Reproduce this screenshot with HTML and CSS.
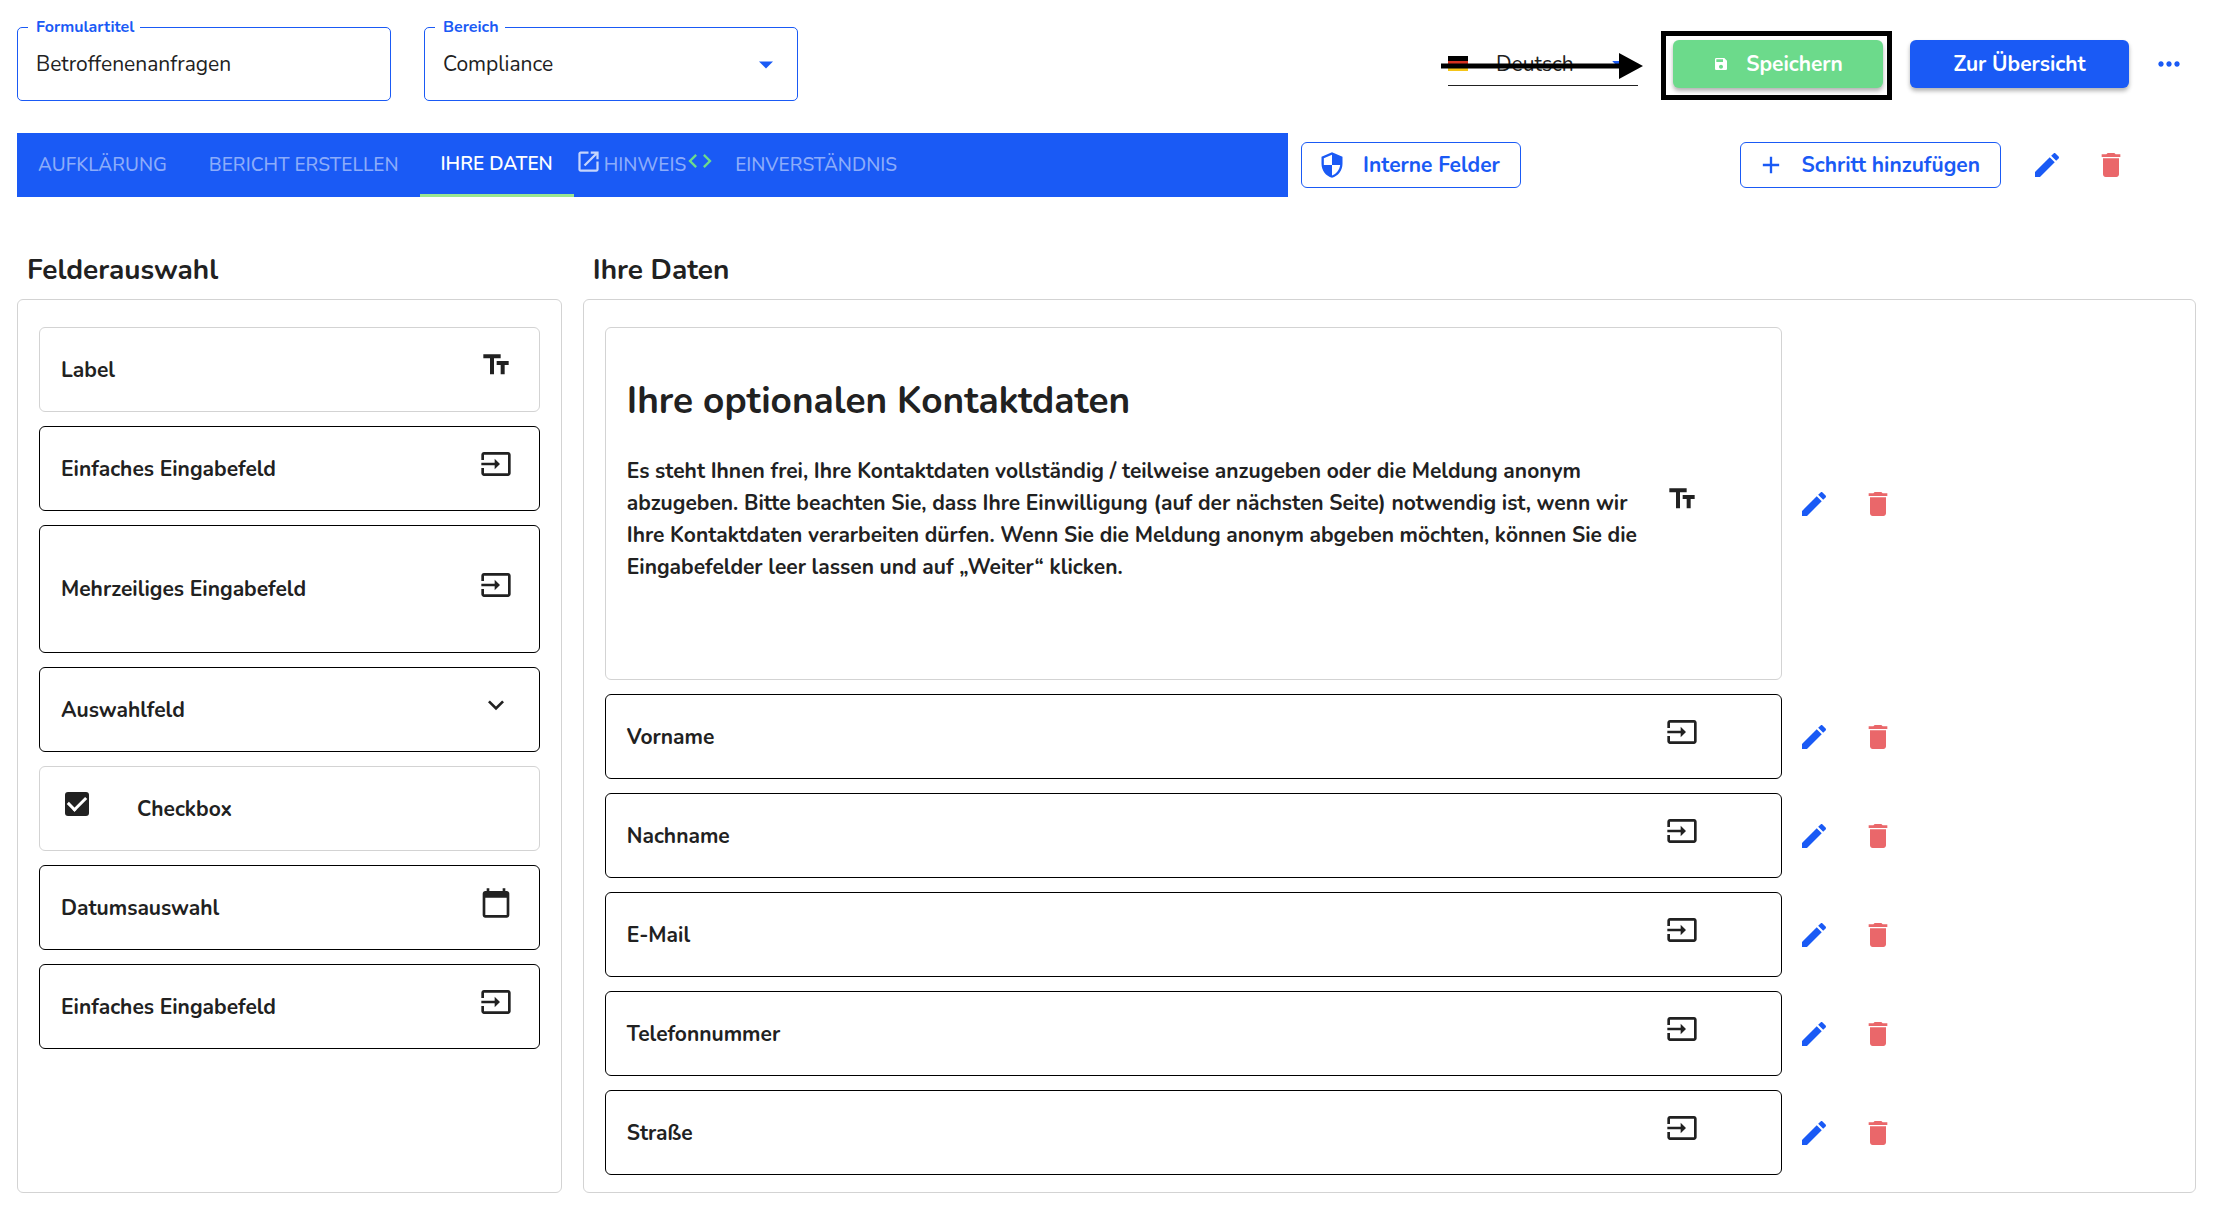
FILE: index.html
```html
<!DOCTYPE html>
<html lang="de">
<head>
<meta charset="utf-8">
<title>Formular bearbeiten</title>
<link rel="stylesheet" href="styles.css">
</head>
<body>
<svg class="sprite" aria-hidden="true">
  <symbol id="i-input" viewBox="0 0 24 24"><path d="M21 3.01H3c-1.1 0-2 .9-2 2V9h2V4.99h18v14.03H3V15H1v4.01c0 1.1.9 1.98 2 1.98h18c1.1 0 2-.88 2-1.98v-14c0-1.11-.9-2-2-2zM11 16l4-4-4-4v3H1v2h10v3z"/></symbol>
  <symbol id="i-text" viewBox="0 0 24 24"><path d="M2.500 4v3h5v12h3V7h5V4h-13zM21.500 9h-9v3h3v7h3v-7h3V9z"/></symbol>
  <symbol id="i-chevron" viewBox="0 0 24 24"><path d="M7.410 8.590 12 13.170l4.590-4.580L18 10l-6 6-6-6z"/></symbol>
  <symbol id="i-calendar" viewBox="0 0 24 24"><path d="M20 3h-1V1h-2v2H7V1H5v2H4c-1.100 0-2 .9-2 2v16c0 1.100.9 2 2 2h16c1.100 0 2-.9 2-2V5c0-1.100-.9-2-2-2zm0 18H4V8h16v13z"/></symbol>
  <symbol id="i-edit" viewBox="0 0 24 24"><path d="M3 17.250V21h3.750L17.810 9.940l-3.750-3.750L3 17.250zM20.710 7.040c.39-.39.39-1.020 0-1.410l-2.340-2.340c-.39-.39-1.020-.39-1.410 0l-1.830 1.830 3.750 3.750 1.830-1.830z"/></symbol>
  <symbol id="i-delete" viewBox="0 0 24 24"><path d="M6 19c0 1.100.9 2 2 2h8c1.100 0 2-.9 2-2V7H6v12zM19 4h-3.500l-1-1h-5l-1 1H5v2h14V4z"/></symbol>
  <symbol id="i-drop" viewBox="0 0 24 24"><path d="M5 8.500h14l-7 7z"/></symbol>
</svg>

<header class="topbar">
  <div class="field">
    <label class="field-label" for="title">Formulartitel</label>
    <input class="field-control" id="title" type="text" value="Betroffenenanfragen">
  </div>
  <div class="field">
    <label class="field-label" for="area">Bereich</label>
    <select class="field-control" id="area"><option>Compliance</option></select>
    <svg class="field-arrow"><use href="#i-drop"/></svg>
  </div>
  <div class="actions">
    <div class="language">
      <svg class="flag" viewBox="0 0 20 15"><path fill="#000" d="M0 0h20v5H0z"/><path fill="#d5301f" d="M0 5h20v5H0z"/><path fill="#f5c518" d="M0 10h20v5H0z"/></svg>
      <select class="language-select" aria-label="Sprache"><option>Deutsch</option></select>
      <svg class="language-arrow"><use href="#i-drop"/></svg>
      <svg class="pointer" viewBox="0 0 202 26"><path d="M0 10.500h178V0l24 13-24 13V15.500H0z"/></svg>
    </div>
    <div class="highlight">
      <button class="btn btn-save" type="button">
        <svg class="icon-save" viewBox="0 0 24 24"><path fill-rule="evenodd" d="M17 3H5c-1.110 0-2 .9-2 2v14c0 1.100.89 2 2 2h14c1.100 0 2-.9 2-2V7l-4-4zm-5 16c-1.660 0-3-1.340-3-3s1.340-3 3-3 3 1.340 3 3-1.340 3-3 3zm3-10H5V5h10v4z"/></svg>
        Speichern
      </button>
    </div>
    <button class="btn btn-overview" type="button">Zur Übersicht</button>
    <button class="icon-btn more" type="button" aria-label="Mehr"><svg class="icon" viewBox="0 0 24 24"><path d="M6 10c-1.100 0-2 .9-2 2s.9 2 2 2 2-.9 2-2-.9-2-2-2zm12 0c-1.100 0-2 .9-2 2s.9 2 2 2 2-.9 2-2-.9-2-2-2zm-6 0c-1.100 0-2 .9-2 2s.9 2 2 2 2-.9 2-2-.9-2-2-2z"/></svg></button>
  </div>
</header>

<div class="steps">
  <nav class="tabs">
    <button class="tab" type="button">AUFKLÄRUNG</button>
    <button class="tab" type="button">BERICHT ERSTELLEN</button>
    <button class="tab tab-active" type="button">IHRE DATEN</button>
    <button class="tab tab-hint" type="button"><svg class="icon-open" viewBox="0 0 24 24"><path d="M19 19H5V5h7V3H5c-1.110 0-2 .9-2 2v14c0 1.100.89 2 2 2h14c1.100 0 2-.9 2-2v-7h-2v7zM14 3v2h3.590l-9.830 9.830 1.410 1.410L19 6.410V10h2V3h-7z"/></svg>HINWEIS<svg class="icon-code" viewBox="0 0 24 24"><path d="M9.400 16.600 4.800 12l4.600-4.600L8 6l-6 6 6 6 1.400-1.400zm5.200 0 4.600-4.600-4.600-4.600L16 6l6 6-6 6-1.400-1.400z"/></svg></button>
    <button class="tab" type="button">EINVERSTÄNDNIS</button>
  </nav>
  <button class="btn-outline" type="button">
    <svg class="icon-lead" viewBox="0 0 24 24"><path fill-rule="evenodd" d="M12 1 3 5v6c0 5.550 3.840 10.740 9 12 5.160-1.260 9-6.450 9-12V5l-9-4zm0 10.990h7c-.53 4.120-3.280 7.790-7 8.940V12H5V6.300l7-3.110v8.800z"/></svg>
    Interne Felder
  </button>
  <div class="step-actions">
    <button class="btn-outline" type="button">
      <svg class="icon-lead" viewBox="0 0 24 24"><path d="M19 13h-6v6h-2v-6H5v-2h6V5h2v6h6v2z"/></svg>
      Schritt hinzufügen
    </button>
    <button class="icon-btn edit" type="button" aria-label="Schritt bearbeiten"><svg class="icon"><use href="#i-edit"/></svg></button>
    <button class="icon-btn delete" type="button" aria-label="Schritt löschen"><svg class="icon"><use href="#i-delete"/></svg></button>
  </div>
</div>

<main class="columns">
  <section class="column">
    <h2 class="column-title">Felderauswahl</h2>
    <div class="panel">
      <div class="card card-soft"><span>Label</span><svg class="icon"><use href="#i-text"/></svg></div>
      <div class="card"><span>Einfaches Eingabefeld</span><svg class="icon"><use href="#i-input"/></svg></div>
      <div class="card card-tall"><span>Mehrzeiliges Eingabefeld</span><svg class="icon"><use href="#i-input"/></svg></div>
      <div class="card"><span>Auswahlfeld</span><svg class="icon"><use href="#i-chevron"/></svg></div>
      <div class="card card-soft card-check"><input class="check" type="checkbox" id="cb" checked><label for="cb">Checkbox</label></div>
      <div class="card"><span>Datumsauswahl</span><svg class="icon"><use href="#i-calendar"/></svg></div>
      <div class="card"><span>Einfaches Eingabefeld</span><svg class="icon"><use href="#i-input"/></svg></div>
    </div>
  </section>

  <section class="column">
    <h2 class="column-title">Ihre Daten</h2>
    <div class="panel">
      <div class="row">
        <div class="card card-soft card-text">
          <div class="copy">
            <h1 class="copy-title">Ihre optionalen Kontaktdaten</h1>
            <p class="copy-body">Es steht Ihnen frei, Ihre Kontaktdaten vollständig / teilweise anzugeben oder die Meldung anonym<br>abzugeben. Bitte beachten Sie, dass Ihre Einwilligung (auf der nächsten Seite) notwendig ist, wenn wir<br>Ihre Kontaktdaten verarbeiten dürfen. Wenn Sie die Meldung anonym abgeben möchten, können Sie die<br>Eingabefelder leer lassen und auf „Weiter“ klicken.</p>
          </div>
          <svg class="icon"><use href="#i-text"/></svg>
        </div>
        <button class="icon-btn edit" type="button" aria-label="Text bearbeiten"><svg class="icon"><use href="#i-edit"/></svg></button>
        <button class="icon-btn delete" type="button" aria-label="Text löschen"><svg class="icon"><use href="#i-delete"/></svg></button>
      </div>
      <div class="row">
        <div class="card"><span>Vorname</span><svg class="icon"><use href="#i-input"/></svg></div>
        <button class="icon-btn edit" type="button" aria-label="Vorname bearbeiten"><svg class="icon"><use href="#i-edit"/></svg></button>
        <button class="icon-btn delete" type="button" aria-label="Vorname löschen"><svg class="icon"><use href="#i-delete"/></svg></button>
      </div>
      <div class="row">
        <div class="card"><span>Nachname</span><svg class="icon"><use href="#i-input"/></svg></div>
        <button class="icon-btn edit" type="button" aria-label="Nachname bearbeiten"><svg class="icon"><use href="#i-edit"/></svg></button>
        <button class="icon-btn delete" type="button" aria-label="Nachname löschen"><svg class="icon"><use href="#i-delete"/></svg></button>
      </div>
      <div class="row">
        <div class="card"><span>E-Mail</span><svg class="icon"><use href="#i-input"/></svg></div>
        <button class="icon-btn edit" type="button" aria-label="E-Mail bearbeiten"><svg class="icon"><use href="#i-edit"/></svg></button>
        <button class="icon-btn delete" type="button" aria-label="E-Mail löschen"><svg class="icon"><use href="#i-delete"/></svg></button>
      </div>
      <div class="row">
        <div class="card"><span>Telefonnummer</span><svg class="icon"><use href="#i-input"/></svg></div>
        <button class="icon-btn edit" type="button" aria-label="Telefonnummer bearbeiten"><svg class="icon"><use href="#i-edit"/></svg></button>
        <button class="icon-btn delete" type="button" aria-label="Telefonnummer löschen"><svg class="icon"><use href="#i-delete"/></svg></button>
      </div>
      <div class="row">
        <div class="card"><span>Straße</span><svg class="icon"><use href="#i-input"/></svg></div>
        <button class="icon-btn edit" type="button" aria-label="Straße bearbeiten"><svg class="icon"><use href="#i-edit"/></svg></button>
        <button class="icon-btn delete" type="button" aria-label="Straße löschen"><svg class="icon"><use href="#i-delete"/></svg></button>
      </div>
    </div>
  </section>
</main>
</body>
</html>
```
FILE: styles.css
```css
* { box-sizing: border-box; }

body {
  margin: 0;
  padding: 27px 18px 23px 17px;
  background: #fff;
  color: #212121;
  font-family: Nunito, Lato, sans-serif;
  font-size: 21px;
}

button, input, select {
  font: inherit;
  color: inherit;
}

button {
  border: 0;
  background: none;
  padding: 0;
  cursor: pointer;
}

svg { fill: currentColor; flex: none; }

.sprite { display: none; }

.icon { width: 32px; height: 32px; display: block; }

/* Top bar */
.topbar {
  display: flex;
  align-items: center;
  gap: 33px;
}

.field {
  position: relative;
  width: 374px;
}

.field-label {
  position: absolute;
  top: -10px;
  left: 11px;
  padding: 0 6px 0 8px;
  background: #fff;
  color: #1a5af5;
  font-size: 16px;
  line-height: 20px;
  font-weight: 700;
}

.field-control {
  display: block;
  width: 100%;
  height: 74px;
  padding: 0 18px;
  border: 1px solid #1a5af5;
  border-radius: 5px;
  background: none;
  appearance: none;
}

.field-arrow {
  position: absolute;
  right: 20px;
  top: 26px;
  width: 24px;
  height: 24px;
  color: #1a5af5;
}

.actions {
  display: flex;
  align-items: center;
  margin-left: auto;
  padding-right: 10px;
}

.language {
  position: relative;
  display: flex;
  align-items: center;
  width: 190px;
  height: 44px;
  border-bottom: 1px solid #212121;
}

.flag { width: 20px; height: 15px; }

.language-select {
  flex: 1;
  margin-left: 28px;
  padding: 0;
  border: 0;
  background: none;
  appearance: none;
}

.language-arrow {
  width: 20px;
  height: 20px;
  margin-right: 10px;
  color: #1a5af5;
}

.pointer {
  position: absolute;
  left: -7px;
  top: 11px;
  width: 202px;
  height: 26px;
  color: #000;
}

.highlight {
  position: relative;
  margin: 0 27px 0 35px;
}

.highlight::before {
  content: "";
  position: absolute;
  inset: -9px -9px -12px -12px;
  border: 5px solid #000;
  pointer-events: none;
}

.btn {
  display: flex;
  align-items: center;
  justify-content: center;
  height: 48px;
  border-radius: 6px;
  color: #fff;
  font-weight: 700;
  box-shadow: 0 3px 4px rgba(0, 0, 0, 0.3);
}

.btn-save { width: 210px; gap: 17px; background: #6cda8b; }
.btn-overview { width: 219px; background: #1a5af5; }
.icon-save { width: 16px; height: 16px; }

.icon-btn {
  display: flex;
  justify-content: center;
  width: 64px;
}

.more { width: 34px; margin-left: 23px; color: #1a5af5; }
.edit { color: #1a5af5; }
.delete { color: #ea676a; }

/* Steps */
.steps {
  display: flex;
  align-items: center;
  margin-top: 32px;
}

.tabs {
  display: flex;
  width: 58.33%;
  height: 64px;
  margin-right: 13px;
  background: #1a5af5;
}

.tab {
  display: flex;
  align-items: center;
  padding: 0 21px;
  color: #8cacfa;
  font-size: 19px;
  font-weight: 500;
}

.tab-active {
  border-bottom: 3px solid #9be68f;
  color: #fff;
  font-weight: 600;
}

.tab-hint { padding: 0 0 0 1px; }
.icon-open { width: 27px; height: 27px; margin: 0 2px 8px 0; color: #c5d5fc; }
.icon-code { width: 28px; height: 28px; margin-bottom: 8px; color: #6cda8b; }

.btn-outline {
  display: flex;
  align-items: center;
  gap: 17px;
  height: 46px;
  padding: 0 20px 0 16px;
  border: 1px solid #1a5af5;
  border-radius: 6px;
  color: #1a5af5;
  font-weight: 700;
}

.icon-lead { width: 28px; height: 28px; }

.step-actions {
  display: flex;
  align-items: center;
  margin-left: auto;
  padding-right: 53px;
}

.step-actions .edit { margin-left: 14px; }

/* Columns */
.columns {
  display: grid;
  grid-template-columns: 25% 1fr;
  column-gap: 21px;
  margin-top: 51px;
}

.column { display: flex; flex-direction: column; }

.column-title {
  margin: 0;
  padding: 0 10px 7px;
  font-size: 28px;
  line-height: 44px;
  font-weight: 700;
}

.panel {
  flex: 1;
  display: flex;
  flex-direction: column;
  gap: 14px;
  padding: 27px 21px 17px;
  border: 1px solid #d3d3d3;
  border-radius: 6px;
}

.row { display: flex; align-items: center; }
.row .card { width: 75%; padding-right: 83px; }

.card {
  display: flex;
  align-items: center;
  justify-content: space-between;
  min-height: 85px;
  padding: 0 27px 0 21px;
  border: 1px solid #000;
  border-radius: 6px;
  font-weight: 700;
}

.card .icon { margin-bottom: 9px; }
.card-soft { border-color: #d3d3d3; }
.card-tall { min-height: 128px; }
.card-check { justify-content: flex-start; gap: 48px; }

.check {
  appearance: none;
  width: 24px;
  height: 24px;
  margin: 0 0 9px 4px;
  border-radius: 3px;
  background: #212121;
  display: grid;
  place-items: center;
}

.check:checked::before {
  content: "";
  width: 15px;
  height: 8px;
  margin-bottom: 5px;
  border: solid #fff;
  border-width: 0 0 3px 3px;
  transform: rotate(-45deg);
}

.card-text { min-height: 353px; }
.copy { padding: 45px 0 96px; white-space: nowrap; }

.copy-title {
  margin: 0 0 26px;
  font-size: 37px;
  line-height: 56px;
}

.copy-body {
  margin: 0;
  line-height: 32px;
}
```
